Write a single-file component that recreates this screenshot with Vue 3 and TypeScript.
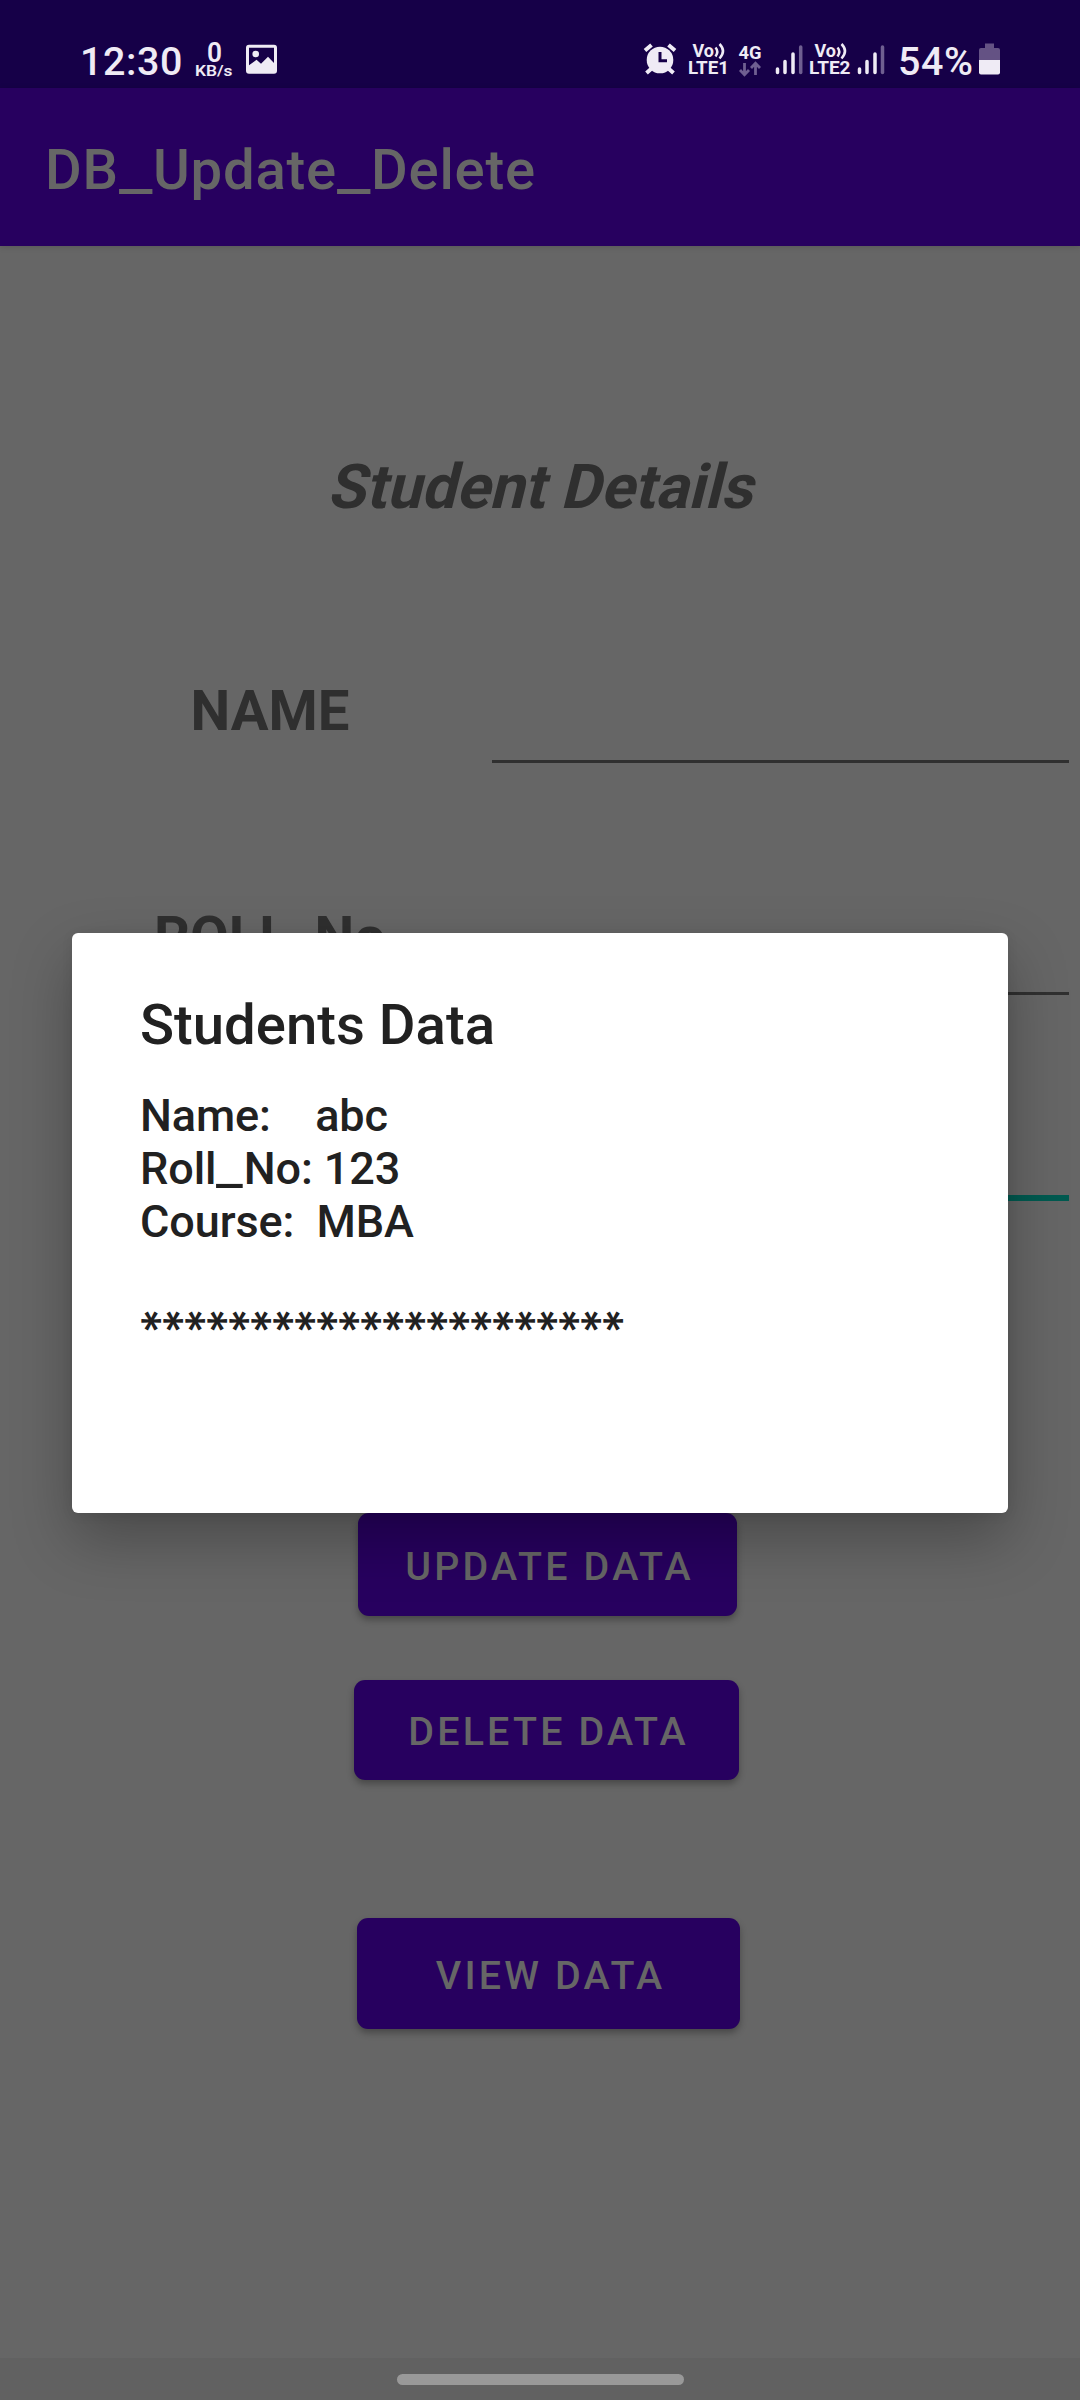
<script setup lang="ts">
interface Action {
  label: string
  kind: string
}

const title = 'DB_Update_Delete'
const actions: Action[] = [
  { label: 'UPDATE DATA', kind: 'update' },
  { label: 'DELETE DATA', kind: 'delete' },
  { label: 'VIEW DATA', kind: 'view' },
]
const lines: string[] = ['Name:    abc', 'Roll_No: 123', 'Course:  MBA', ' ']
const starCount = 22

// Underscores are drawn wider than the font's own glyph.
const parts = (text: string): string[] => text.split(/(_)/)
</script>

<template>
  <div class="screen">
    <header class="status">
      <span class="clock">12:30</span>
      <svg class="speed" width="40" height="88" viewBox="194 0 40 88">
        <text x="207" y="62" font-size="28" textLength="15" lengthAdjust="spacingAndGlyphs">0</text>
        <text x="195" y="76" font-size="15.5" textLength="37.5" lengthAdjust="spacingAndGlyphs">KB/s</text>
      </svg>
      <svg class="gallery" width="32" height="88" viewBox="246 0 32 88">
        <path
          fill-rule="evenodd"
          d="M249 44.7h25q3 0 3 3v23q0 3-3 3h-25q-3 0-3-3v-23q0-3 3-3zM249 47.700v17.600l7.500-5.500 4.500 4 7-7 6 6.200V47.700z"
        />
        <circle cx="255.700" cy="54" r="3.300" />
      </svg>
      <svg class="alarm" width="36" height="88" viewBox="642 0 36 88">
        <circle cx="660" cy="60" r="13.300" />
        <path class="stroke" d="M645 50.500l6.500-5.500M675 50.500l-6.500-5.500M651 69l-4.500 4M669 69l4.500 4" stroke-width="4" />
        <path d="M660 52v8.700h7" fill="none" stroke="#160048" stroke-width="3" />
      </svg>
      <svg class="volte" width="42" height="88" viewBox="688 0 42 88">
        <text x="692.500" y="57" font-size="17.500" textLength="21.500" lengthAdjust="spacingAndGlyphs">Vo</text>
        <path class="stroke" d="M715.500 47.500q3.600 4 0 9M719.500 44q7 7 0 14.500" stroke-width="2.500" />
        <text x="688" y="74" font-size="18" textLength="41" lengthAdjust="spacingAndGlyphs">LTE1</text>
      </svg>
      <svg class="data" width="24" height="88" viewBox="738 0 24 88">
        <text x="738.500" y="58.500" font-size="19" textLength="23" lengthAdjust="spacingAndGlyphs">4G</text>
        <path class="stroke dim" d="M744.500 63v11M740 70l4.500 4.700 4.500-4.700M755.500 75V64M751 68l4.500-4.700 4.500 4.700" stroke-width="2.800" />
      </svg>
      <svg class="signal" width="28" height="88" viewBox="775 0 28 88">
        <path class="stroke round" d="M777.500 69v3.500M785 61.500v11M793 54v18.500" stroke-width="3.500" />
        <path class="stroke round dim" d="M800.700 47v25.500" stroke-width="3.500" />
      </svg>
      <svg class="volte second" width="42" height="88" viewBox="809 0 42 88">
        <text x="814.500" y="57" font-size="17.500" textLength="21.500" lengthAdjust="spacingAndGlyphs">Vo</text>
        <path class="stroke" d="M837.500 47.500q3.600 4 0 9M841.500 44q7 7 0 14.500" stroke-width="2.500" />
        <text x="809" y="74" font-size="18" textLength="41.500" lengthAdjust="spacingAndGlyphs">LTE2</text>
      </svg>
      <svg class="signal second" width="28" height="88" viewBox="857 0 28 88">
        <path class="stroke round" d="M859.500 69v3.500M867 61.500v11M875 54v18.500" stroke-width="3.500" />
        <path class="stroke round dim" d="M882.500 47v25.500" stroke-width="3.500" />
      </svg>
      <span class="percent">54%</span>
      <svg class="battery" width="22" height="88" viewBox="979 0 22 88">
        <path class="dimfill" d="M985 43.500h9v4.500h4q2 0 2 2v10h-21V50q0-2 2-2h4z" />
        <path d="M979 60h21v12.500q0 2-2 2h-17q-2 0-2-2z" />
      </svg>
    </header>

    <div class="appbar"><span v-for="(t, i) in parts(title)" :key="i" :class="{ wide: t === '_' }">{{ t }}</span></div>

    <main class="content">
      <h1 class="heading">Student Details</h1>
      <div class="row name">
        <label>NAME</label>
        <div class="field"></div>
      </div>
      <div class="row roll">
        <label>ROLL_No</label>
        <div class="field"></div>
      </div>
      <div class="row course">
        <div class="field focused"></div>
      </div>
      <button v-for="a in actions" :key="a.kind" class="action" :class="a.kind">{{ a.label }}</button>
    </main>

    <footer class="nav"><div class="pill"></div></footer>

    <section class="dialog">
      <h2>Students Data</h2>
      <p v-for="(line, i) in lines" :key="i"><span v-for="(t, j) in parts(line)" :key="j" :class="{ wide: t === '_' }">{{ t }}</span></p>
      <div class="stars"><span v-for="n in starCount" :key="n">*</span></div>
    </section>
  </div>
</template>

<style>
body {
  margin: 0;
  background: #666;
}
</style>

<style scoped>
.screen {
  position: relative;
  box-sizing: border-box;
  width: 1080px;
  height: 2400px;
  display: flex;
  flex-direction: column;
  overflow: hidden;
  background: #666;
  font-family: Roboto, sans-serif;
}
.wide {
  display: inline-block;
  width: 0.605em;
  transform: scaleX(1.33);
  transform-origin: 0 0;
}
.status {
  height: 88px;
  flex: none;
  display: flex;
  background: #160048;
  color: #efebf5;
  font-size: 39.4px;
  font-weight: 500;
  line-height: 123px;
}
.status svg {
  flex: none;
  display: block;
  fill: #efebf5;
  font-family: Roboto, sans-serif;
  font-weight: 700;
}
.status .speed {
  font-weight: 600;
}
.stroke {
  fill: none;
  stroke: #efebf5;
}
.round {
  stroke-linecap: round;
}
.stroke.dim {
  stroke: #6f5f91;
}
.status .dimfill {
  fill: #645284;
}
.clock {
  width: 114px;
  padding-left: 80px;
  letter-spacing: 0.6px;
}
.gallery {
  margin-left: 12px;
}
.alarm {
  margin-left: 364px;
}
.volte {
  margin-left: 10px;
}
.data {
  margin-left: 8px;
}
.signal {
  margin-left: 13px;
}
.volte.second,
.signal.second {
  margin-left: 6px;
}
.percent {
  width: 81px;
  padding-left: 13px;
  white-space: nowrap;
  letter-spacing: 0.6px;
}
.appbar {
  position: relative;
  flex: none;
  box-sizing: border-box;
  height: 158px;
  padding: 3px 0 0 45px;
  background: #27005f;
  color: #666;
  font-size: 56.25px;
  font-weight: 500;
  line-height: 158px;
  letter-spacing: 0.8px;
  box-shadow: 0 1px 6px rgba(0, 0, 0, 0.15);
}
.content {
  flex: 1;
  display: flex;
  flex-direction: column;
}
.heading {
  margin: 205px 0 0;
  padding-right: 1px;
  color: #2f2f2f;
  text-align: center;
  font-size: 61.9px;
  font-weight: 700;
  line-height: 72px;
  transform: skewX(-14deg);
  transform-origin: 50% 57px;
}
.row {
  display: flex;
  align-items: flex-end;
}
.row label {
  width: 442px;
  margin-left: 49px;
  margin-right: 1px;
  color: #2f2f2f;
  text-align: center;
  font-size: 56.25px;
  font-weight: 700;
  line-height: 66px;
}
.field {
  width: 577px;
  height: 80px;
  box-sizing: border-box;
  border-bottom: 3px solid #303030;
}
.name {
  margin-top: 155px;
}
.name label {
  margin-bottom: 19px;
}
.roll {
  margin-top: 141px;
}
.roll label {
  margin-bottom: 25px;
}
.course {
  margin-top: 126px;
  justify-content: flex-end;
  padding-right: 11px;
}
.focused {
  border-bottom: 6px solid #005a50;
}
.action {
  flex: none;
  display: block;
  padding: 0 0 0 4px;
  border: 0;
  border-radius: 11px;
  background: #27005f;
  color: #666;
  font-family: Roboto, sans-serif;
  font-size: 39.4px;
  font-weight: 500;
  letter-spacing: 3.2px;
  text-align: center;
  box-shadow: 0 4px 7px rgba(0, 0, 0, 0.3);
}
.update {
  width: 379px;
  height: 103px;
  margin: 312px 0 0 358px;
  padding-top: 4px;
}
.delete {
  width: 385px;
  height: 100px;
  margin: 64px 0 0 354px;
  padding-top: 3px;
}
.view {
  width: 383px;
  height: 111px;
  margin: 138px 0 0 357px;
  padding-top: 4px;
}
.nav {
  flex: none;
  height: 42px;
  display: flex;
  justify-content: center;
  background: #616161;
}
.pill {
  width: 287px;
  height: 11px;
  margin-top: 15.5px;
  border-radius: 6px;
  background: #999;
}
.dialog {
  position: absolute;
  left: 72px;
  top: 933px;
  width: 936px;
  height: 580px;
  box-sizing: border-box;
  padding: 59px 68px 0;
  border-radius: 6px;
  background: #fff;
  color: #212121;
  box-shadow: 0 26px 60px rgba(0, 0, 0, 0.28), 0 2px 12px rgba(0, 0, 0, 0.08);
}
.dialog h2 {
  margin: 0 0 31px;
  font-size: 56.25px;
  font-weight: 500;
  line-height: 66px;
}
.dialog p {
  margin: 0;
  height: 53px;
  font-size: 45px;
  font-weight: 500;
  line-height: 53px;
  letter-spacing: -0.1px;
  white-space: pre;
}
.stars {
  display: flex;
  height: 40px;
}
.stars span {
  display: flex;
  justify-content: center;
  flex: none;
  width: 22px;
  height: 40px;
  font-family: Inter, sans-serif;
  font-size: 48px;
  font-weight: 500;
  line-height: 56px;
  transform: rotate(90deg);
}
</style>
